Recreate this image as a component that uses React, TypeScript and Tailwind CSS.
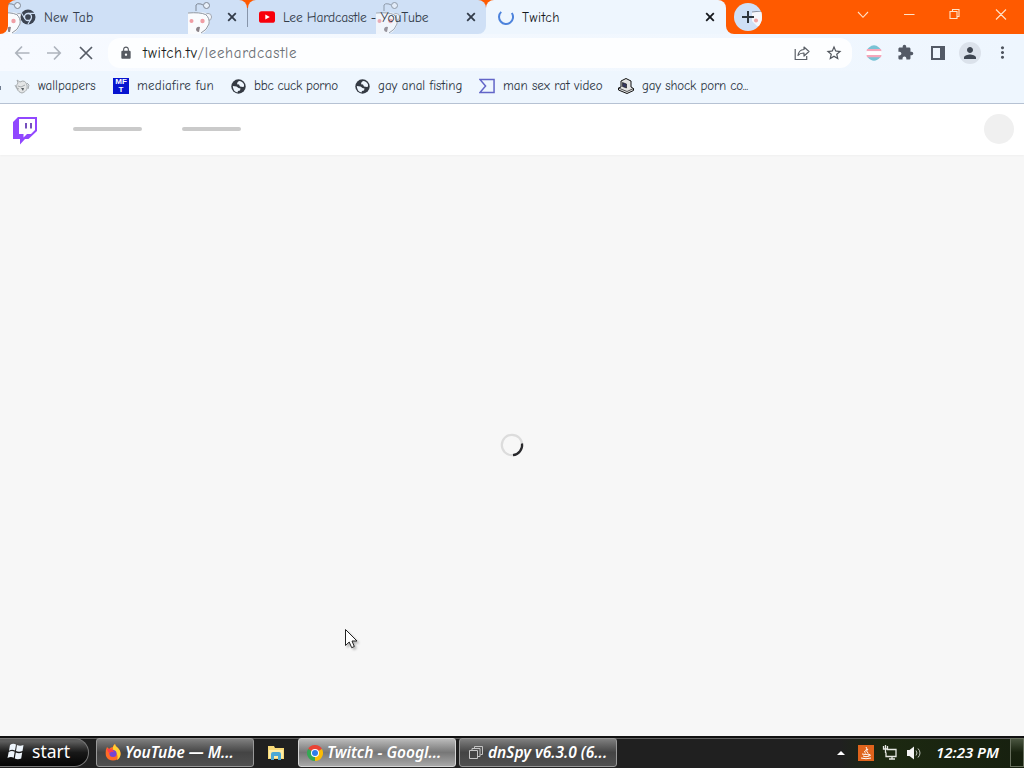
import { ReactNode } from "react";
import { clsx } from "clsx";
import {
  MdExtension,
  MdLock,
  MdMoreVert,
  MdPerson,
  MdStarBorder,
} from "react-icons/md";

const comic = "font-['Comic_Sans_MS','Comic_Neue','Open_Sans',sans-serif]";

function Snoo({ className }: { className?: string }) {
  return (
    <svg className={className} width="26" height="34" viewBox="0 0 26 34" fill="none">
      <path d="M0 12.5h15q6 0 7 6 .5 7-5 13-3 3-8 3H0z" fill="#fafbfd" />
      <circle cx="20" cy="17" r="3.6" fill="#f4f6fa" stroke="#a3aab5" />
      <path d="M0 13q12-1 17.500 1.500Q22 18 21 24q-2 6-8 9" fill="#fafbfd" stroke="#8d95a0" />
      <path d="M8 11V5q1-2 5-1l2 1" stroke="#7f8895" />
      <circle cx="18.500" cy="5.5" r="3" fill="#e8f0fa" stroke="#7f8895" />
      <circle cx="3.500" cy="21" r="2" fill="#ef9da4" />
      <circle cx="14.5" cy="21" r="2.2" fill="#ef9da4" />
      <path d="M8 29q1-3 4-2l-1 5q-3 0-3-3" fill="#8a8288" />
    </svg>
  );
}

function CloseIcon({ className }: { className?: string }) {
  return (
    <svg className={className} width="10" height="10" viewBox="0 0 10 10" stroke="currentColor" strokeWidth="1.8">
      <path d="M1.2 1.2l7.6 7.6M8.8 1.2L1.2 8.8" />
    </svg>
  );
}

function ChromeMono() {
  return (
    <svg width="16" height="16" viewBox="0 0 16 16" fill="none">
      <circle cx="8" cy="8" r="7.5" fill="#3c4452" />
      <circle cx="8" cy="8" r="3.5" fill="#3c4452" stroke="#cfe0f6" strokeWidth="1.3" />
      <path d="M8 4.4h7M4.9 9.8L1.6 4.2M11.1 9.8l-3.3 5.7" stroke="#cfe0f6" strokeWidth="1.1" />
    </svg>
  );
}

function ChromeColor() {
  return (
    <svg width="16" height="16" viewBox="0 0 16 16">
      <path d="M8 8L1.07 4A8 8 0 0 1 14.93 4z" fill="#ea4335" />
      <path d="M8 8L14.93 4A8 8 0 0 1 8 16z" fill="#fbbc05" />
      <path d="M8 8v8A8 8 0 0 1 1.07 4z" fill="#34a853" />
      <circle cx="8" cy="8" r="4" fill="#fff" />
      <circle cx="8" cy="8" r="3" fill="#2f7de9" />
    </svg>
  );
}

function Globe() {
  return (
    <svg width="15" height="15" viewBox="0 0 15 15">
      <circle cx="7.500" cy="7.500" r="7.200" fill="#343a43" />
      <path d="M8 2q3.500 0 5 3.500 .5 2.500-1 2.500l-3-.5-1-2-2-.2Q6 3 8 2z" fill="#eef6fe" />
      <path d="M1.800 7l3.700.5 2 1.500 2 .5-.5 2-2 .5-.5 1.500Q2 12.500 1.800 7z" fill="#eef6fe" />
    </svg>
  );
}

function Tab({
  icon,
  title,
  active,
  className,
}: {
  icon: ReactNode;
  title: string;
  active?: boolean;
  className?: string;
}) {
  return (
    <div
      className={clsx(
        "flex h-[34px] items-center rounded-t-lg text-[13.5px]",
        active ? "bg-[#eef6fe] text-[#15181c]" : "bg-[#cfe0f6] text-[#323b49]",
        className
      )}
    >
      <span className="relative z-10 mr-2 flex w-4 shrink-0 justify-center">{icon}</span>
      <span className="relative z-10 flex-1 pt-0.5 whitespace-nowrap">{title}</span>
      <CloseIcon className="shrink-0" />
    </div>
  );
}

function TabStrip() {
  return (
    <div className="relative flex h-[34px] bg-[#ff5a00]">
      <div className="w-2 bg-[#eef6fe]">
        <div className="h-full rounded-br-lg bg-[#ff5a00]" />
      </div>
      <Tab className="w-[239px] pr-[10px] pl-3 tracking-[0.15px]" icon={<ChromeMono />} title="New Tab" />
      <div className="flex w-px flex-col">
        <div className="mt-2 h-[19px] bg-[#8795aa]" />
        <div className="flex-1 bg-[#cfe0f6]" />
      </div>
      <div className="w-[238px] bg-[linear-gradient(to_bottom,#ff5a00_50%,#eef6fe_50%)]">
        <Tab
          className="rounded-br-lg pr-[10px] pl-[11px] tracking-[-0.18px]"
          icon={
            <svg width="16" height="12" viewBox="0 0 16 12">
              <rect width="16" height="11.5" y=".3" rx="2.6" fill="#f8000b" />
              <path d="M6.3 3.4v5.2L10.8 6z" fill="#fff" />
            </svg>
          }
          title="Lee Hardcastle - YouTube"
        />
      </div>
      <Tab
        active
        className="w-[240px] pr-[11px] pl-3 tracking-[0.4px]"
        icon={
          <svg width="16" height="16" viewBox="0 0 16 16" fill="none" stroke="#4d83dc" strokeWidth="2">
            <path d="M3.2 2.9A7 7 0 1 0 13.8 4" />
          </svg>
        }
        title="Twitch"
      />
      <div className="flex-1 bg-[#eef6fe]">
        <div className="flex h-full items-center rounded-bl-lg bg-[#ff5a00] pl-2">
          <div className="relative flex size-7 items-center justify-center overflow-hidden rounded-full bg-[#cfe0f6]">
            <svg className="absolute top-2 right-0" width="10" height="16" viewBox="0 0 10 16">
              <path d="M0 1h10v14H5L0 10z" fill="#f6f7fb" />
              <path d="M0 1l9-1" stroke="#8b93a1" />
              <circle cx="4" cy="9.500" r="2" fill="#efa6a6" />
            </svg>
            <svg className="relative" width="12" height="12" viewBox="0 0 12 12" stroke="#2d353c" strokeWidth="2">
              <path d="M6 0v12M0 6h12" />
            </svg>
          </div>
          <svg className="ml-[93px]" width="160" height="34" viewBox="0 0 160 34" fill="none" stroke="#ffe3c8" strokeWidth="1.1">
            <path d="M3 12l5 5.3L13 12M49 14.5h10.5" />
            <path d="M95 11.5h7v7h-7zM97.5 11.500V9.5h6.500v7H102M141 9.5l10 10M151 9.500l-10 10" />
          </svg>
        </div>
      </div>
      <div className="absolute top-0 left-2 h-[34px] w-4 overflow-hidden">
        <Snoo className="absolute -left-[9px]" />
      </div>
      <Snoo className="absolute top-0 left-[188px]" />
      <Snoo className="absolute top-0 left-[376px] opacity-80" />
    </div>
  );
}

function Toolbar() {
  return (
    <div className="flex h-[37px] items-center bg-linear-to-r from-[#f7faff] to-[#eef6fe]">
      <svg className="ml-[14px]" width="80" height="16" viewBox="0 0 80 16" fill="none" stroke="#aeb4bd" strokeWidth="1.700">
        <path d="M15.500 8H2M8 1.500L1.800 8 8 14.500M33 8h13.500M40 1.500L46.200 8 40 14.500" />
        <path d="M66 2l12 12M78 2L66 14" stroke="#565c66" />
      </svg>
      <div className="ml-[14px] flex h-[30px] w-[744px] items-center rounded-xl bg-[#fdfeff] pl-[11px]">
        <MdLock className="text-[#565a61]" size={14} />
        <span className="ml-[10px] flex-1 pt-px text-[15px] tracking-[0.66px] whitespace-nowrap text-[#6b6f75]">
          <span className="text-[#1b1e22]">twitch.tv</span>/leehardcastle
        </span>
        <svg className="mr-[15px]" width="16" height="16" viewBox="0 0 16 16" fill="none" stroke="#5b6067" strokeWidth="1.200">
          <path d="M1.200 4v10.500h11.500V11" />
          <path d="M4 10.500q.5-5.500 6-6V2l5 4.500-5 4.500V8q-4-.2-6 2.500z" strokeLinejoin="round" />
        </svg>
        <MdStarBorder className="mr-[9px]" color="#50555c" size={18} />
      </div>
      <svg className="ml-[14px]" width="16" height="16" viewBox="0 0 16 16">
        <path d="M3 2.500Q8-2 13 2.500L14.500 4h-13zM1.500 12h13Q8 19.500 1.500 12z" fill="#79c3d5" />
        <path d="M1 4h14l.5 2.200H.500zM.500 10h15L15 12.300H1z" fill="#f5a7bb" />
        <path d="M.500 6.200h15V10H.500z" fill="#fff" />
      </svg>
      <MdExtension className="ml-[15px]" color="#535a66" size={17} />
      <svg className="ml-[17px]" width="14" height="14" viewBox="0 0 14 14">
        <path d="M1 1h12v12H1z" fill="none" stroke="#535a66" strokeWidth="2" />
        <path d="M9 0H14v14H9z" fill="#535a66" />
      </svg>
      <div className="ml-[14px] flex size-[22px] items-center justify-center rounded-full bg-[#dbe2eb]">
        <MdPerson color="#3f4752" size={18} />
      </div>
      <MdMoreVert className="ml-3" color="#4e545e" size={19} />
    </div>
  );
}

const bookmarks = [
  {
    title: "wallpapers",
    className: "w-[99px]",
    icon: (
      <svg width="16" height="16" viewBox="0 0 16 16" fill="none">
        <path d="M3 2l3 2q5-3 7 3c1 5-2 7-5 8-5-1-7-7-4-10z" fill="#e4e6e7" stroke="#a6abae" />
        <path d="M1 7q1 4 4 4M13 5l2 2-1 4M4 8l3 1 4-2" stroke="#a6abae" />
        <path d="M7 10h3l-1 3z" fill="#555c61" />
      </svg>
    ),
  },
  {
    title: "mediafire fun",
    className: "w-[117px] tracking-[0.25px]",
    icon: (
      <span className="flex size-4 flex-col items-center justify-center bg-[#0714d0] font-['Liberation_Sans',sans-serif] text-[8px] leading-[8px] font-bold tracking-normal text-white">
        <span>MF</span>
        <span>T</span>
      </span>
    ),
  },
  { title: "bbc cuck porno", className: "w-[124px] tracking-[-0.25px]", icon: <Globe /> },
  { title: "gay anal fisting", className: "w-[125px]", icon: <Globe /> },
  {
    title: "man sex rat video",
    className: "w-[139px]",
    icon: (
      <svg width="17" height="16" viewBox="0 0 17 16" fill="none" stroke="#6265c8" strokeWidth="1.600">
        <path d="M1 1h15v14H1l6-7z" />
      </svg>
    ),
  },
  {
    title: "gay shock porn co...",
    className: "w-[140px] tracking-[-0.15px]",
    icon: (
      <svg width="16" height="16" viewBox="0 0 16 16" stroke="#111" strokeWidth="1">
        <path d="M3 3l5-2.500L13 3v6l2.500 1.500v2L9 15.500.500 12v-2L3 9z" fill="#e4e4e4" />
        <path d="M4.500 4.500l4 1.500v4l-4-1.500z" fill="#34365e" strokeWidth=".6" />
        <path d="M.500 10l8.500 3.500 6.500-3" fill="none" strokeWidth=".7" />
      </svg>
    ),
  },
];

function BookmarksBar() {
  return (
    <div className="flex h-[33px] items-center border-b border-[#b6c2d3] bg-[#eef6fe] pb-0.5 text-[13px] text-[#2b3442]">
      <span className="w-[14px] pt-1">
        <span className="block h-1 w-px bg-[#6f7c90]" />
      </span>
      {bookmarks.map((b) => (
        <div key={b.title} className={clsx("flex shrink-0 items-center whitespace-nowrap", b.className)}>
          <span className="mr-2 flex w-4 shrink-0 justify-center">{b.icon}</span>
          {b.title}
        </div>
      ))}
    </div>
  );
}

function TwitchPage() {
  return (
    <main className="relative flex flex-1 flex-col bg-[#f7f7f7]">
      <div className="flex h-[51px] items-center bg-white pr-[10px] pb-0.5 pl-[13px] shadow-[0_1px_2px_rgba(0,0,0,0.03)]">
        <svg className="mt-1" width="24" height="28" viewBox="0 0 24 28">
          <path d="M5 0h19v14l-8.500 8H12l-5 5.500V22H0V5z" fill="#9147ff" />
          <path d="M6 2h16v11l-4 4h-4l-3.500 3.500V17H6z" fill="#fff" />
          <path d="M12 6h2v5.500h-2zM17 6h2v5.500h-2z" fill="#7650bd" />
        </svg>
        <div className="ml-9 h-1 w-[69px] rounded-full bg-[#cacaca]" />
        <div className="ml-10 h-1 w-[59px] rounded-full bg-[#cacaca]" />
        <div className="ml-auto size-[30px] rounded-full bg-[#f0f0f0]" />
      </div>
      <div className="flex flex-1 items-center justify-center pb-0.5">
        <svg width="24" height="24" viewBox="0 0 24 24" fill="none" strokeWidth="2.200">
          <circle cx="12" cy="12" r="10.200" stroke="#dcdcdc" />
          <path d="M22 10.500A10.200 10.200 0 0 1 13 22.200" stroke="#29292c" />
        </svg>
      </div>
      <svg className="absolute top-[524px] left-[344px] drop-shadow-[2px_2px_1px_rgba(0,0,0,0.25)]" width="14" height="22" viewBox="0 0 14 22">
        <path d="M1.500 1.500v16l3.700-3.500 2.500 5.700 2.600-1.200L8 13h5z" fill="#fff" stroke="#222" />
      </svg>
    </main>
  );
}

function TaskButton({ icon, label, active, className }: { icon: ReactNode; label: string; active?: boolean; className?: string }) {
  return (
    <div
      className={clsx(
        "flex h-[29px] w-[158px] shrink-0 items-center rounded-[3px] border pl-2 font-['Noto_Sans',sans-serif] text-[15.5px] font-semibold whitespace-nowrap text-white italic",
        active
          ? "border-[#d5d5d5] bg-linear-to-b from-[#bbb] via-[#777] to-[#a8a8a8]"
          : "border-[#999] bg-linear-to-b from-[#808080] via-[#444] to-[#505050]",
        className
      )}
    >
      <span className="mr-1 flex w-4 shrink-0 justify-center">{icon}</span>
      {label}
    </div>
  );
}

function Taskbar() {
  return (
    <div className="flex h-8 items-center border-t-2 border-[#111] bg-[linear-gradient(to_right,#202020_82%,#1c2911_86%,#17200f)] pb-px shadow-[inset_0_1px_0_#626262]">
      <div className="flex h-[29px] w-[89px] items-center rounded-r-full border border-l-0 border-[#777] bg-linear-to-b from-[#5c5c5c] from-10% via-[#181818] via-50% to-[#050505] pb-[3px] pl-[7px] font-['Noto_Sans',sans-serif] text-[17.5px] text-white">
        <svg className="mr-[7px]" width="18" height="17" viewBox="0 0 18 17" fill="#edf4fb">
          <path d="M3 2q3-2 6-.5L8 7.500Q5 6 2 7.700zM10 2q3 1.500 6.500 0L15.500 8Q12 9.500 9 8zM1.700 9q3-1.800 6-.2l-1 6Q4 13 .5 15zM8.800 9.500q3 1.500 6.400 0l-1 6q-3.400 1.500-6.400 0z" />
        </svg>
        start
      </div>
      <TaskButton
        className="ml-[7px]"
        label="YouTube — M..."
        icon={
          <svg width="16" height="17" viewBox="0 0 16 17">
            <path d="M2 3l2 2q2-2 4-2 0-2 2-3 0 2 3 4c3 3 3 6 2 8-2 6-12 6-14 0Q0 7 2 3z" fill="#ff6b26" />
            <path d="M10 0q0 2 3 4c4 4 3 10-1 12 2-5-1-7-3-9-2-3-1-5 1-7z" fill="#ffd233" />
            <circle cx="8" cy="9.500" r="3.600" fill="#7544d4" />
            <path d="M2 5q5-1 7 3-3-1-4 1-2 0-3-4z" fill="#ff3c4c" />
          </svg>
        }
      />
      <svg className="mx-[13px] shrink-0" width="18" height="16" viewBox="0 0 18 16">
        <path d="M1 1h6l1 2h9v11H1z" fill="#f7d978" />
        <path d="M2 5h14v8H2z" fill="#ffeda6" />
        <path d="M4 15V9q0-2 2-2h6q2 0 2 2v6h-3v-4H7v4z" fill="#4ba9d5" />
      </svg>
      <TaskButton active label="Twitch - Googl..." icon={<ChromeColor />} />
      <TaskButton
        className="ml-[3px]"
        label="dnSpy v6.3.0 (6..."
        icon={
          <svg width="14" height="14" viewBox="0 0 14 14" fill="none" stroke="#c5c5c5">
            <path d="M.500 4.500h8v8h-8zM3 4V2.500h8v8H9M5.500 2V.500h8v8H11.500" />
          </svg>
        }
      />
      <div className="ml-auto flex h-full items-center">
        <span className="mr-[13px] border-x-4 border-b-4 border-x-transparent border-b-white" />
        <svg className="mr-2" width="16" height="16" viewBox="0 0 16 16" fill="none" stroke="#fff">
          <path d="M0 0h16v16H0z" fill="#df641c" stroke="none" />
          <path d="M8 2q2 2-.5 3.500T8 8.500M10 4Q7 6 10 8M4 9q4 1 7 0v2q-3 1.500-6 0M11 9.500q3 0 0 2M3 13q5 1.500 10 0" />
        </svg>
        <svg className="mr-2" width="16" height="16" viewBox="0 0 16 16" fill="none" stroke="#e7e9e3" strokeWidth="1.300">
          <path d="M5 4.500h9v7H4v-4M7 14h6M10 12v2M1.500 1v3h4V1M3.500 0v8" />
        </svg>
        <svg className="mr-[14px]" width="16" height="16" viewBox="0 0 16 16" fill="none" stroke="#bfc4bb">
          <path d="M1 5h2.500L8 1.500v13L3.500 11H1z" fill="#f4f4f4" stroke="none" />
          <path d="M10 5.500q2 2.500 0 5M12 3.500q4 4.500 0 9" />
        </svg>
        <span className="mr-[11px] font-['Noto_Sans',sans-serif] text-[15px] font-semibold whitespace-nowrap text-white italic">
          12:23 PM
        </span>
        <div className="h-[29px] w-[14px] border border-[#68705e] bg-linear-to-b from-[#4a5540] via-[#18220f] to-[#141e0c]" />
      </div>
    </div>
  );
}

export default function App() {
  return (
    <div className={clsx("flex h-[768px] w-[1024px] flex-col overflow-hidden", comic)}>
      <TabStrip />
      <Toolbar />
      <BookmarksBar />
      <TwitchPage />
      <Taskbar />
    </div>
  );
}
